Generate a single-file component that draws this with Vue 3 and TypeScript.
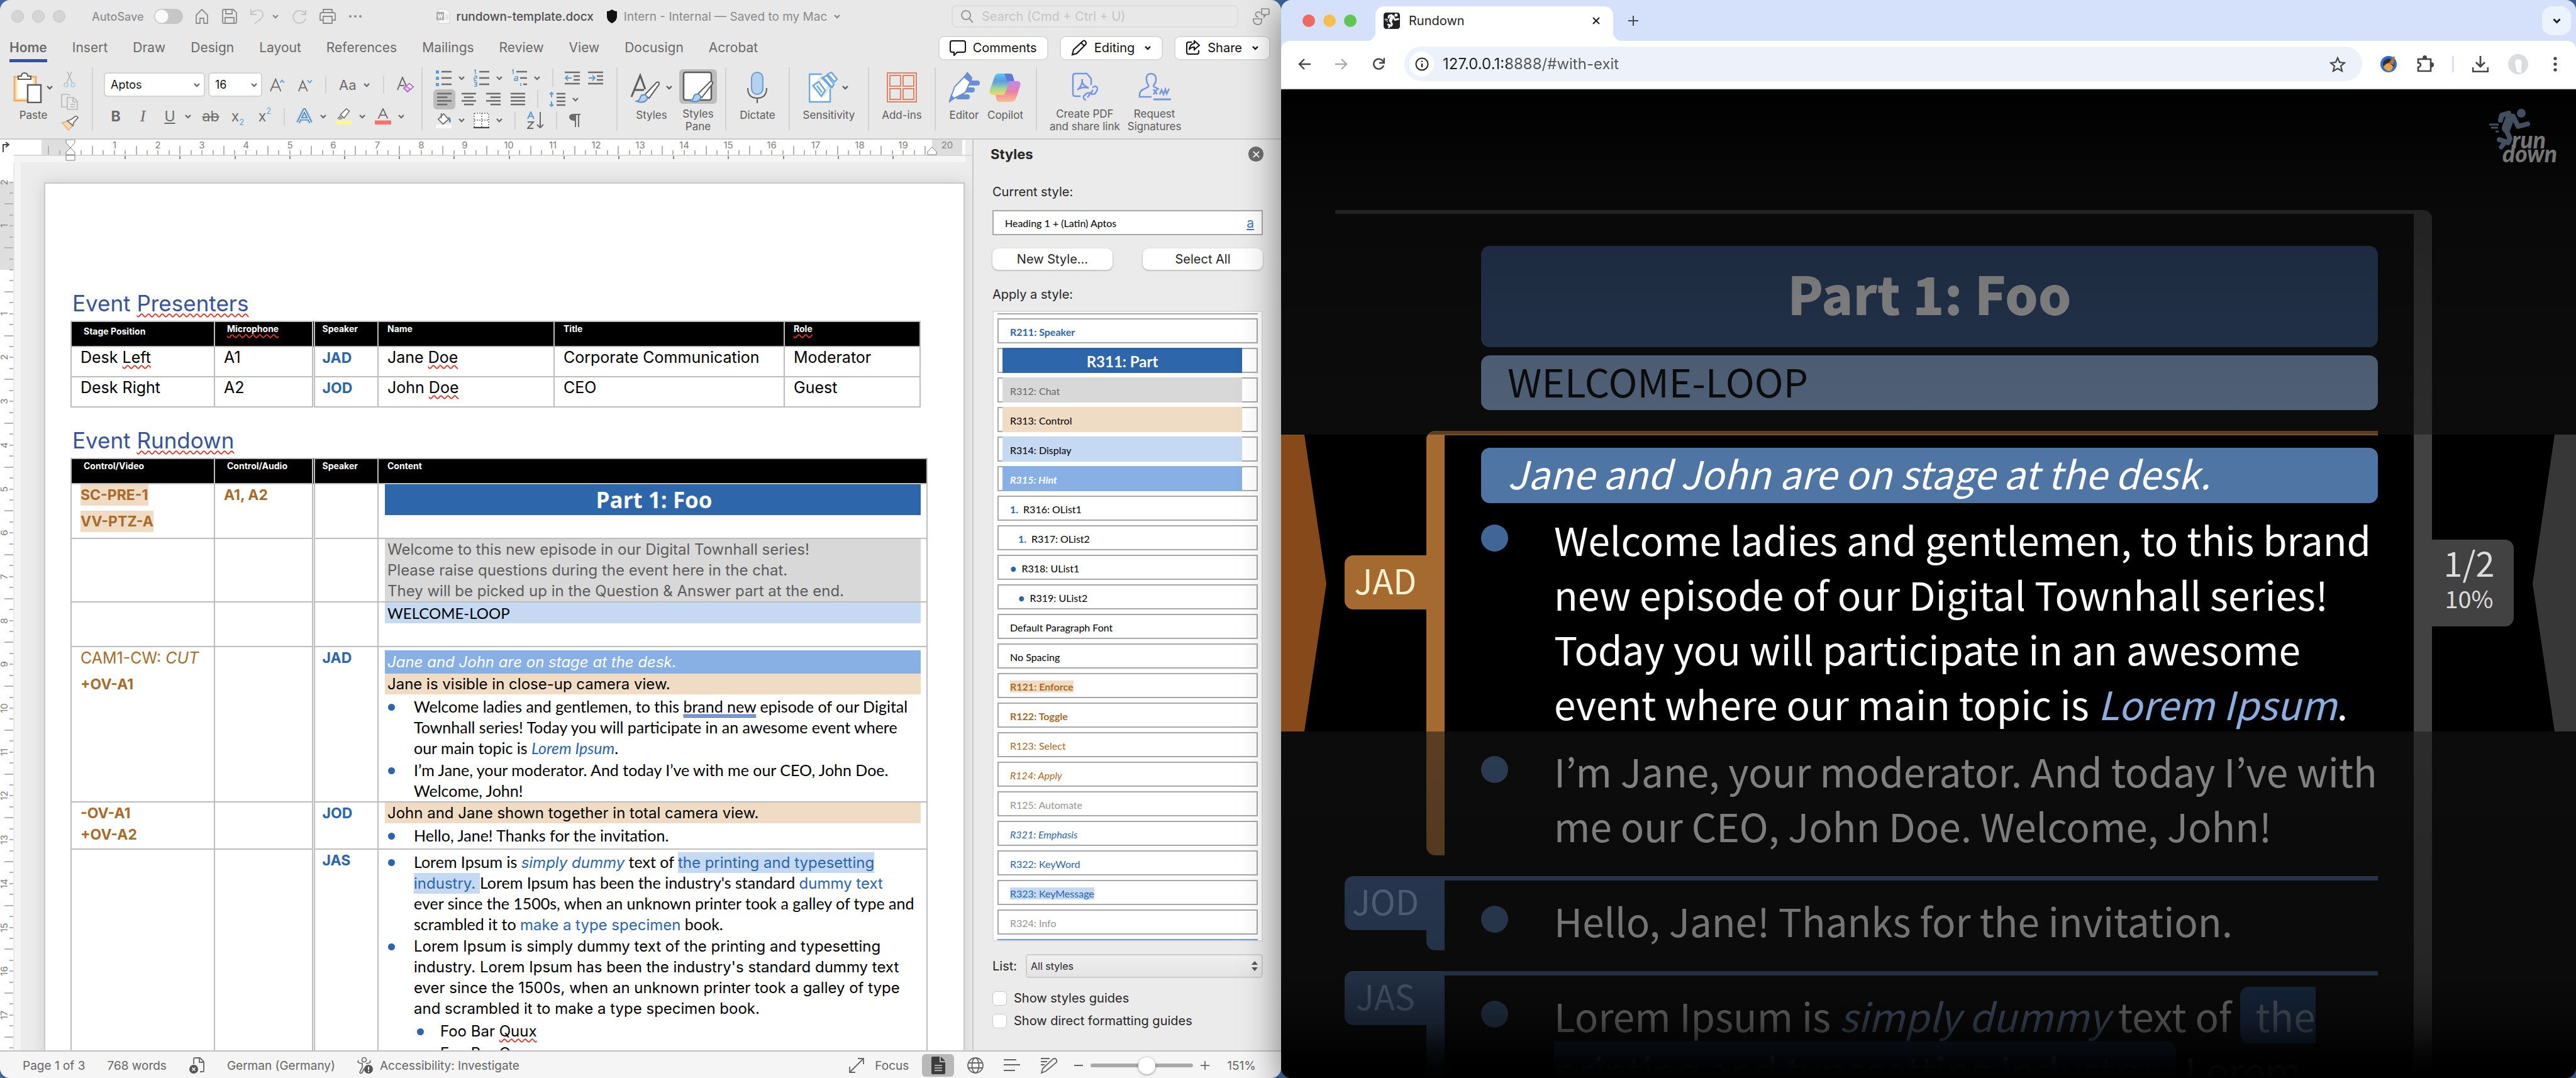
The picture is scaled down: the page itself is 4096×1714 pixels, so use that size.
<script setup lang="ts">
import { h, ref } from 'vue'

type IconDef = [number, number, string]

const runner =
  '<circle cx="51" cy="7" r="7" fill="currentColor" stroke="none"/><path stroke-width="14" d="M33 14 27 31"/><path stroke-width="8" d="M31 7 20 10 18 18M38 12l8 16 15-4M27 34l6 13-3 7-14-5"/><path stroke-width="7" d="m26 52-7 9"/><path stroke-width="3" stroke-linecap="butt" d="M0 25h15M3 30h11M10 36h5"/>'

const bars = (rows: number[][]) =>
  rows.map(([x1, x2], i) => `<path stroke-width="2.6" d="M${x1} ${3 + i * 6}H${x2}"/>`).join('')

const icons: Record<string, IconDef> = {
  home: [24, 24, '<path stroke-width="1.8" d="M3 10 12 1l9 9v13h-6v-8H9v8H3z"/>'],
  save: [24, 24, '<path stroke-width="1.8" d="M1 3q0-2 2-2h15l5 5v15q0 2-2 2H3q-2 0-2-2zM6 1v7h10V1M5 23v-9h14v9"/>'],
  undo: [24, 26, '<path stroke-width="1.8" d="M2 1v9h9M2 9C8 1 20 1 21 10c1 7-9 10-13 15"/>'],
  redo: [24, 24, '<path stroke-width="1.8" d="M22 2v7h-7M21 8A10 10 0 1 0 22 15"/>'],
  print: [26, 24, '<path stroke-width="1.8" d="M6 6V1h14v5M6 18H1V9q0-3 3-3h18q3 0 3 3v9h-5M6 12h14v11H6z"/>'],
  dots: [22, 6, '<g fill="currentColor" stroke="none"><circle cx="3" cy="3" r="2"/><circle cx="11" cy="3" r="2"/><circle cx="19" cy="3" r="2"/></g>'],
  chev: [12, 8, '<path stroke-width="2.4" d="m2 2 4 4 4-4"/>'],
  file: [22, 24, '<path fill="#f6f6f6" stroke="#cfcfcf" d="M3 .5h12l6 6v17H3z"/><path fill="#a9a9a9" stroke="none" d="M0 5h12v13H0z"/><path stroke="#fff" stroke-width="1.5" d="m2.500 8 1.500 7 2-6 2 6L9.500 8"/><path stroke="#c4c4c4" d="M14 10h5M14 13h5M14 16h5"/>'],
  shield: [18, 22, '<path fill="#111" stroke="none" d="M9 0c3 2 5 3 8 3v8c0 6-4 9-8 11-4-2-8-5-8-11V3c3 0 5-1 8-3z"/>'],
  search: [22, 22, '<circle cx="9" cy="9" r="7" stroke-width="2"/><path stroke-width="2" d="m14 14 6 7"/>'],
  person: [28, 28, '<path stroke-width="1.700" d="M15 2h10q2 0 2 2v5q0 2-2 2h-3l-3 4v-4h-4zM13 9a4 4 0 1 0-3 6M2 18h13v3q0 6-6 6t-7-6z"/>'],
  comment: [26, 26, '<path stroke-width="2" d="M4 2h18q3 0 3 3v12q0 3-3 3H12l-5 5v-5H4q-3 0-3-3V5q0-3 3-3z"/>'],
  pencil: [26, 26, '<path stroke-width="2" d="m2 24 2-8L18 3q3-3 5 0t0 5L9 22zM16 5l5 5"/>'],
  share: [24, 24, '<path stroke-width="2" d="M10 3H5Q2 3 2 6v13q0 3 3 3h13q3 0 3-3v-3M14 1l8 7-8 7v-4q-6 0-8 4Q7 6 14 5z"/>'],
  paste: [46, 50, '<path fill="#fae6b8" stroke="#ecae74" stroke-width="3" d="M2 8h34v38H2z"/><path fill="#fff" stroke="none" d="M7 12h24v30H7z"/><path fill="#fff" stroke-width="2" d="M8 12V7h5q0-5 5-5t5 5h5v5z"/><path fill="#fff" stroke-width="2.500" d="M23 21h21v28H23z"/>'],
  cut: [20, 26, '<path stroke="#b9b9b9" stroke-width="1.700" d="m6 1 8 18M13 1 5 19"/><g stroke="#a9cbe8" stroke-width="1.700"><circle cx="4" cy="22" r="3"/><circle cx="15" cy="22" r="3"/></g>'],
  copy: [28, 26, '<path stroke="#b9b9b9" stroke-width="1.700" d="M9 21H1V1h11l2 2M10 6h10l6 6v13H10zM19 6v7h7M15 17h7M15 21h7"/>'],
  brush: [28, 24, '<path fill="#f8dcae" stroke="#ecae74" stroke-width="1.700" d="m2 11 12-3 5 7-7 8z"/><path fill="#fff" stroke-width="1.700" d="m10 8 6-2 8-6 3 3-7 8-1 5z"/>'],
  growA: [26, 24, '<path stroke-width="2" d="m1 23 9-21 9 21M4 16h12"/><path stroke="#5a9fd8" stroke-width="2" d="m18 8 3-4 4 4"/>'],
  shrinkA: [26, 24, '<path stroke-width="2" d="m2 23 7-18 8 18M4 17h10"/><path stroke="#5a9fd8" stroke-width="2" d="m17 4 4 4 4-4"/>'],
  clearA: [28, 26, '<path stroke-width="2" d="M1 21 9 1l6 14M4 14h8"/><path fill="#e7c9ef" stroke="#b064c0" stroke-width="1.700" d="m11 18 9-7 6 5-9 8z"/><path fill="#fff" stroke="#b064c0" stroke-width="1.500" d="m15 15 5-4 6 5-4 4z"/>'],
  texta: [28, 26, '<path stroke="#b5d4ef" stroke-width="8" d="m4 23 10-20 10 20"/><path stroke="#4c86c6" stroke-width="5" d="m4 23 10-20 10 20M8 17h12"/><path stroke="#fff" stroke-width="1.500" d="m4 23 10-20 10 20M8 17h12"/>'],
  hilite: [28, 28, '<path fill="#999" stroke="none" d="m2 18 5-6 5 5-4 3z"/><path fill="#fff" stroke-width="1.700" d="m8 11 10-10 5 4-9 12z"/><path fill="#fdf98b" stroke="none" d="M1 21h26v7H1z"/>'],
  colorA: [28, 28, '<path stroke-width="2" d="m6 18 8-17 8 17M9 12h10"/><path fill="#f2746a" stroke="none" d="M0 21h28v7H0z"/>'],
  bullets: [25, 26, '<g fill="#5a9fd8" stroke="none"><path d="M0 1h5v5H0zM0 11h5v5H0zM0 21h5v5H0z"/></g><path stroke-width="2.500" d="M9 3h16M9 13h16M9 23h16"/>'],
  numbers: [25, 28, '<path stroke="#5a9fd8" stroke-width="1.500" d="m1 2 2-1v7M1 11h4v3H1v4h4M1 21h4v6H1M2 24h3"/><path stroke-width="2.500" d="M9 4h16M9 14h16M9 24h16"/>'],
  multi: [25, 28, '<path stroke="#5a9fd8" stroke-width="1.500" d="m1 2 2-1v7M5 12h5v6H5v-3h5M15 22v5"/><path stroke-width="2.500" d="M8 4h17M14 14h11M19 24h6"/>'],
  outdent: [24, 24, '<path stroke-width="2.500" d="M0 3h24M14 9h10M14 15h10M0 21h24"/><path stroke="#5a9fd8" stroke-width="2" d="M11 12H1m4-4-4 4 4 4"/>'],
  indent: [24, 24, '<path stroke-width="2.500" d="M0 3h24M14 9h10M14 15h10M0 21h24"/><path stroke="#5a9fd8" stroke-width="2" d="M1 12h10M7 8l4 4-4 4"/>'],
  left: [24, 24, bars([[0, 24], [0, 17], [0, 24], [0, 17]])],
  center: [24, 24, bars([[0, 24], [4, 20], [0, 24], [4, 20]])],
  right: [24, 24, bars([[0, 24], [7, 24], [0, 24], [7, 24]])],
  justify: [24, 24, bars([[0, 24], [0, 24], [0, 24], [0, 24]])],
  spacing: [26, 24, '<path stroke="#5a9fd8" stroke-width="2" d="M4 1v8M1 4l3-3 3 3M4 23v-8m-3 5 3 3 3-3"/><path stroke-width="2.500" d="M12 3h14M12 9h14M12 15h14M12 21h14"/>'],
  bucket: [26, 26, '<path fill="#fff" stroke-width="1.800" d="m4 11 9-9 8 9-9 8z"/><path stroke-width="1.800" d="M9 1v8"/><path stroke="#5a86c0" stroke-width="3" d="M21 8q3 3 2 8"/><path fill="#fafafa" stroke="none" d="M0 20h26v6H0z"/>'],
  borders: [25, 25, '<path fill="#fff" stroke="none" d="M0 0h25v25H0z"/><path stroke-width="1.500" stroke-dasharray="2 2" d="M1 1h23v22M1 1v22M13 1v22M1 12h23"/><path stroke="#444" stroke-width="2.500" d="M0 24h25"/>'],
  sort: [28, 28, '<path stroke="#5a9fd8" stroke-width="2" d="m1 12 5-11 5 11M3 8h6"/><path stroke-width="2" d="M1 17h9L1 27h9M21 1v25m-5-5 5 5 5-5"/>'],
  pilcrow: [20, 22, '<path fill="currentColor" stroke="none" d="M9 1h10v2h-2v19h-2V3h-3v19h-2V12H8Q1 11 1 6t8-5z"/>'],
  styles: [50, 50, '<path stroke-width="3" d="m2 40 14-34 8 22M7 29h15"/><path fill="#fff" stroke-width="2" d="M23 37 42 17q5-2 4 3L30 42z"/><path fill="#b2d2f0" stroke="#5b8fc6" stroke-width="2" d="M10 47q5-1 6-6t8-4q5 3 2 8-5 6-16 2z"/>'],
  pane: [52, 50, '<rect x="3" y="2" width="44" height="44" rx="3" fill="#fff" stroke-width="2.500"/><path fill="#fff" stroke-width="2" d="M25 37 45 17q5-2 4 3L32 42z"/><path fill="#b2d2f0" stroke="#5b8fc6" stroke-width="2" d="M13 47q5-1 6-6t8-4q5 3 2 8-5 6-16 2z"/>'],
  mic: [34, 50, '<rect x="8" y="1" width="18" height="35" rx="9" fill="#b2d2f0" stroke="#6b9bd0" stroke-width="2"/><path stroke-width="2" d="M2 26q0 16 15 16t15-16M17 42v8"/>'],
  sens: [46, 50, '<path fill="#fff" stroke="#6ba9dc" stroke-width="2.500" d="M1 4h33v44H1z"/><path fill="#fff" stroke="#e8e8e8" stroke-width="6" d="m8 24 18-22 16 8-18 26z"/><path fill="#fff" stroke="#6ba9dc" stroke-width="2.500" d="m7 22 9-6 10 14-6 9zM13 22l8 11M21 10l8-4 11 14-3 5zM30 4l6-3 9 11-4 4z"/><path stroke="#6ba9dc" stroke-width="4" d="m22 9 14 16"/>'],
  addins: [48, 48, '<path stroke="#df8466" stroke-width="2" d="M1 1h46v46H1zM5 5h17v17H5zM26 5h17v17H26zM5 26h17v17H5zM26 26h17v17H26z"/>'],
  editor: [50, 50, '<g fill="#6c8fd2" stroke="none"><rect x="24" y="14" width="26" height="8" rx="4"/><rect x="18" y="25" width="24" height="8" rx="4"/><rect x="12" y="36" width="22" height="8" rx="4"/></g><path fill="#fff" stroke="#6c8fd2" stroke-width="2" d="M2 46 10 24 30 3l7 8-10 22L6 44z"/><path fill="#6c8fd2" stroke="none" d="m1 50 3-14 6 6zM30 0l8 9-4 8-10-8z"/>'],
  copilot: [50, 48, '<defs><linearGradient id="cpa" x1="0" y1="0" x2="0" y2="1"><stop offset="0" stop-color="#5ec7f0"/><stop offset=".35" stop-color="#5b9be0"/><stop offset=".7" stop-color="#9ed79a"/><stop offset="1" stop-color="#f6d860"/></linearGradient><linearGradient id="cpb" x1="0" y1="0" x2="0" y2="1"><stop offset="0" stop-color="#b98bf0"/><stop offset=".5" stop-color="#ec7fa8"/><stop offset="1" stop-color="#f9c08a"/></linearGradient></defs><path fill="url(#cpa)" stroke="none" d="M14 2h18q5 0 4 6l-8 22q-2 6-8 6H6q-7 0-5-8L8 8q2-6 6-6z"/><path fill="#5f7ad8" stroke="none" d="M24 2h9q4 0 5 5l2 7H28z"/><path fill="url(#cpb)" stroke="none" d="M32 14h12q7 0 5 8l-6 18q-2 7-8 7H16q-4 0-5-5l-1-6h10q5 0 6-5z"/>'],
  pdf: [42, 46, '<path stroke="#7396e0" stroke-width="2.500" d="M14 38H6q-4 0-4-4V6q0-4 4-4h18l7 8v10M9 28q8-6 8-17-3 8 10 14-10-3-18 3zM23 44q-5-1-4-6l4-4q4-3 7 0M33 24l4-2q5 1 4 6l-4 6q-4 2-7-1M25 40l9-12"/>'],
  sign: [52, 44, '<path stroke="#7396e0" stroke-width="2.500" d="M21 38H2q-1-9 6-12l8-4q1-2-2-6-4-14 6-15 11 1 7 15-4 4-2 6l8 4M24 26l6 8M30 26l-6 8M34 34l3-7 3 7 3-8 2 7 4-8"/><path stroke="#7396e0" stroke-width="3" d="M24 42h28"/>'],
  close: [14, 14, '<path stroke-width="2" d="m2 2 10 10M12 2 2 12"/>'],
  plus: [16, 16, '<path stroke-width="2" d="M8 0v16M0 8h16"/>'],
  minus: [14, 14, '<path stroke-width="2" d="M0 7h14"/>'],
  proof: [26, 28, '<path stroke-width="1.800" d="M8 12V4q0-2 2-2h8l6 6v14q0 2-2 2h-4M17 2v7h7"/><circle cx="8" cy="20" r="7" fill="#555" stroke="none"/><path stroke="#fff" stroke-width="1.600" d="m5.500 17.500 5 5m0-5-5 5"/>'],
  access: [26, 28, '<circle cx="11" cy="5" r="3.500" stroke-width="1.700"/><path stroke-width="1.700" d="M2 6q-2 3 1 4l5 1v6l-4 8q2 3 4 0l3-6M20 6q2 3-1 4l-5 1"/><circle cx="18" cy="20" r="7" fill="#555" stroke="none"/><path stroke="#fff" stroke-width="2" d="M18 16v5M18 22.500v2"/>'],
  focus: [24, 24, '<path stroke-width="1.800" d="M14 1h9v9M23 1 1 23M1 14v9h9"/>'],
  page: [22, 28, '<path fill="#3d3d3d" stroke="none" d="M2 0h11v9h9v17q0 2-2 2H2q-2 0-2-2V2q0-2 2-2zM15 0l7 7h-7z"/><path stroke="#d0d0d0" stroke-width="1.700" d="M5 14h12M5 18h12M5 22h12"/>'],
  globe: [26, 26, '<circle cx="13" cy="13" r="12" stroke-width="1.800"/><ellipse cx="13" cy="13" rx="5.500" ry="12" stroke-width="1.800"/><path stroke-width="1.800" d="M2 9h22M2 17h22"/>'],
  outline: [26, 22, '<path stroke-width="1.800" d="M0 2h20M0 10h26M0 19h18"/>'],
  draft: [28, 26, '<path stroke-width="1.800" d="M1 2h14M1 7h10M1 12h6M2 25l2-7L20 3q3-2 5 0t1 5L9 22z"/>'],
  back: [20, 20, '<path stroke-width="2.400" d="M20 10H2m8-8-8 8 8 8"/>'],
  fwd: [20, 20, '<path stroke-width="2.400" d="M0 10h18M10 2l8 8-8 8"/>'],
  reload: [20, 20, '<path stroke-width="2.500" d="M18 12a8 8 0 1 1-2-8l2 3M19 0v8h-8"/>'],
  info: [22, 22, '<circle cx="11" cy="11" r="9.500" stroke-width="2"/><path stroke-width="2.400" d="M11 10v6M11 5.500v2"/>'],
  star: [26, 26, '<path stroke-width="2.200" d="m13 3 3 7 8 1-6 5 2 8-7-4-7 4 2-8-6-5 8-1z"/>'],
  broom: [26, 26, '<circle cx="13" cy="13" r="13" fill="#2f6cd0" stroke="none"/><circle cx="13" cy="13" r="9" fill="#2e2e33" stroke="none"/><path fill="#e5a04a" stroke="none" d="M5 17q4-6 9-6l6 5q0 6-5 8-6 1-10-7z"/><path fill="#b4713c" stroke="none" d="M20 1h3l-2 13-8-2z"/>'],
  puzzle: [28, 28, '<path stroke-width="2.600" d="M3 6h20v19H3v-6q4-1 4-4t-4-3z"/><path fill="currentColor" stroke="none" d="M10 5q0-5 3.500-5T17 5zM24 11q4 0 4 4t-4 4z"/>'],
  download: [26, 26, '<path stroke-width="2.800" d="M13 0v16M6 10l7 7 7-7M1 18v7h24v-7"/>'],
  avatar: [32, 32, '<circle cx="16" cy="16" r="16" fill="#dcdddf" stroke="none"/><path fill="#fbfcfd" stroke="#c9d0d6" d="M12 28q1-5-1-8-3-12 5-13 9 1 6 13-1 4 1 10-6 2-11-2z"/>'],
  more: [6, 24, '<g fill="currentColor" stroke="none"><circle cx="3" cy="3" r="2.600"/><circle cx="3" cy="12" r="2.600"/><circle cx="3" cy="21" r="2.600"/></g>'],
  fav: [72, 72, `<rect width="72" height="72" rx="12" fill="#202124" stroke="none"/><g transform="translate(4 4)" stroke="#fff" color="#fff" stroke-linecap="round" stroke-linejoin="round">${runner}</g>`],
  runner: [66, 66, runner],
}

const Icon = (p: { n: string; w?: number }) => {
  const [vw, vh, body] = icons[p.n]
  const w = p.w ?? vw
  return h('svg', {
    width: w,
    height: Math.round((w * vh) / vw),
    viewBox: `0 0 ${vw} ${vh}`,
    fill: 'none',
    stroke: 'currentColor',
    'aria-hidden': 'true',
    innerHTML: body,
  })
}
Icon.props = ['n', 'w']

const tabs = ['Home', 'Insert', 'Draw', 'Design', 'Layout', 'References', 'Mailings', 'Review', 'View', 'Docusign', 'Acrobat']

const cm = 69.7
const hTicks = Array.from({ length: 81 }, (_, i) => i - 2).map((q) => ({ x: Math.round(90 + (q * cm) / 4), tall: Math.abs(q) % 4 === 2 }))
const hNums = Array.from({ length: 20 }, (_, i) => i + 1).map((n) => ({ n, x: Math.round(90 + n * cm) }))
const tabStops = Array.from({ length: 15 }, (_, i) => Math.round(90 + (i + 1) * 87.2))
const vTicks = Array.from({ length: 80 }, (_, i) => i - 8).map((q) => ({ y: Math.round(171 + (q * cm) / 4), tall: Math.abs(q) % 4 === 2 }))
const vNums = Array.from({ length: 20 }, (_, i) => i - 2).filter((n) => n).map((n) => ({ n: Math.abs(n), y: Math.round(171 + n * cm) }))

interface StyleItem { t: string; c?: string; mark?: string }
const styleItems: StyleItem[] = [
  { t: 'R211: Speaker', c: 'b blue' },
  { t: 'R311: Part', c: 'fill part' },
  { t: 'R312: Chat', c: 'fill chat' },
  { t: 'R313: Control', c: 'fill control' },
  { t: 'R314: Display', c: 'fill display' },
  { t: 'R315: Hint', c: 'fill hint' },
  { t: 'R316: OList1', mark: '1.' },
  { t: 'R317: OList2', mark: '1.', c: 'deep' },
  { t: 'R318: UList1', mark: '•' },
  { t: 'R319: UList2', mark: '•', c: 'deep' },
  { t: 'Default Paragraph Font' },
  { t: 'No Spacing' },
  { t: 'R121: Enforce', c: 'b brown mark-o' },
  { t: 'R122: Toggle', c: 'b brown' },
  { t: 'R123: Select', c: 'brown' },
  { t: 'R124: Apply', c: 'brown i' },
  { t: 'R125: Automate', c: 'grey' },
  { t: 'R321: Emphasis', c: 'blue i' },
  { t: 'R322: KeyWord', c: 'blue' },
  { t: 'R323: KeyMessage', c: 'blue mark-b' },
  { t: 'R324: Info', c: 'grey' },
]

const autosave = ref(false)
const zoom = ref(56)
const query = ref('')
const current = ref('Heading 1 + (Latin) Aptos')
const url = ref('127.0.0.1:8888/#with-exit')
const guides = ref(false)
const direct = ref(false)
</script>

<template>
  <div class="desktop">
    <section class="word">
      <header class="titlebar">
        <div class="lights"><i></i><i></i><i></i></div>
        <label class="autosave">AutoSave <input v-model="autosave" type="checkbox" role="switch" /></label>
        <div class="quick">
          <button aria-label="Home"><Icon n="home" /></button>
          <button aria-label="Save"><Icon n="save" /></button>
          <button aria-label="Undo" class="pale"><Icon n="undo" /></button>
          <button aria-label="Undo history" class="tight"><Icon n="chev" /></button>
          <button aria-label="Redo" class="pale"><Icon n="redo" /></button>
          <button aria-label="Print"><Icon n="print" /></button>
          <button aria-label="More"><Icon n="dots" /></button>
        </div>
        <div class="docname">
          <Icon n="file" /><strong>rundown-template.docx</strong><Icon n="shield" class="sh" />
          <span>Intern - Internal — Saved to my Mac</span><Icon n="chev" />
        </div>
        <label class="search"><Icon n="search" /><input v-model="query" placeholder="Search (Cmd + Ctrl + U)" aria-label="Search" /></label>
        <button class="person" aria-label="Presence"><Icon n="person" /></button>
      </header>

      <nav class="tabs">
        <button v-for="(t, i) in tabs" :key="t" :class="{ on: i === 0 }">{{ t }}</button>
        <div class="actions">
          <button><Icon n="comment" />Comments</button>
          <button><Icon n="pencil" />Editing<Icon n="chev" class="cv" /></button>
          <button><Icon n="share" />Share<Icon n="chev" class="cv" /></button>
        </div>
      </nav>

      <div class="ribbon">
        <div class="group clip">
          <button class="big"><span class="pic"><Icon n="paste" /><Icon n="chev" /></span>Paste</button>
          <div class="mini">
            <button aria-label="Cut"><Icon n="cut" /></button>
            <button aria-label="Copy"><Icon n="copy" /></button>
            <button aria-label="Format painter"><Icon n="brush" /></button>
          </div>
        </div>
        <div class="group font">
          <div class="row r1">
            <div class="selects">
              <span class="sel wide"><select aria-label="Font"><option>Aptos</option></select><Icon n="chev" /></span>
              <span class="sel"><select aria-label="Size"><option>16</option></select><Icon n="chev" /></span>
            </div>
            <button aria-label="Grow"><Icon n="growA" w="24" /></button>
            <button aria-label="Shrink"><Icon n="shrinkA" w="24" /></button>
            <hr />
            <button class="split aa">Aa<Icon n="chev" /></button>
            <hr />
            <button aria-label="Clear"><Icon n="clearA" /></button>
          </div>
          <div class="row r2">
            <button class="ch"><b>B</b></button>
            <button class="ch serif"><i>I</i></button>
            <button class="split"><u class="ch">U</u><Icon n="chev" /></button>
            <button class="ch"><s>ab</s></button>
            <button class="ch sub">x<small>2</small></button>
            <button class="ch sup">x<small>2</small></button>
            <hr />
            <div class="row r3">
              <button class="split"><Icon n="texta" /><Icon n="chev" /></button>
              <button class="split"><Icon n="hilite" w="26" /><Icon n="chev" /></button>
              <button class="split"><Icon n="colorA" w="26" /><Icon n="chev" /></button>
            </div>
          </div>
        </div>
        <div class="group para">
          <div class="row">
            <button class="split"><Icon n="bullets" /><Icon n="chev" /></button>
            <button class="split"><Icon n="numbers" /><Icon n="chev" /></button>
            <button class="split"><Icon n="multi" /><Icon n="chev" /></button>
            <hr />
            <button aria-label="Outdent"><Icon n="outdent" /></button>
            <button aria-label="Indent"><Icon n="indent" /></button>
          </div>
          <div class="row al">
            <button v-for="a in ['left', 'center', 'right', 'justify']" :key="a" :aria-label="a" :class="['abtn', { on: a === 'left' }]"><Icon :n="a" w="23" /></button>
            <hr />
            <button class="split"><Icon n="spacing" /><Icon n="chev" /></button>
          </div>
          <div class="row">
            <button class="split"><Icon n="bucket" w="25" /><Icon n="chev" /></button>
            <button class="split"><Icon n="borders" /><Icon n="chev" /></button>
            <hr />
            <button aria-label="Sort"><Icon n="sort" /></button>
            <hr />
            <button aria-label="Marks"><Icon n="pilcrow" /></button>
          </div>
        </div>
        <div class="group g-styles">
          <button class="big"><span class="pic"><Icon n="styles" /><Icon n="chev" /></span>Styles</button>
          <button class="big on"><span class="pic"><Icon n="pane" /></span>Styles<br />Pane</button>
        </div>
        <div class="group g1"><button class="big"><span class="pic"><Icon n="mic" /></span>Dictate</button></div>
        <div class="group g2"><button class="big"><span class="pic"><Icon n="sens" /><Icon n="chev" /></span>Sensitivity</button></div>
        <div class="group g3"><button class="big"><span class="pic"><Icon n="addins" /></span>Add-ins</button></div>
        <div class="group g4">
          <button class="big"><span class="pic"><Icon n="editor" /></span>Editor</button>
          <button class="big"><span class="pic"><Icon n="copilot" /></span>Copilot</button>
        </div>
        <div class="group g5">
          <button class="big"><span class="pic"><Icon n="pdf" /></span>Create PDF<br />and share link</button>
          <button class="big"><span class="pic"><Icon n="sign" /></span>Request<br />Signatures</button>
        </div>
      </div>

      <div class="work">
        <div class="editor">
          <div class="corner"><svg width="22" height="24" fill="none" stroke="#444" stroke-width="2"><path d="M5 20V8h8M9 4l5 4-5 4" /></svg></div>
          <svg class="hruler" width="100%" height="36">
            <rect width="100%" height="24" fill="#fff" />
            <rect y="24" width="100%" height="12" fill="#f5f5f5" />
            <rect x="44" width="46" height="24" fill="#dedede" />
            <rect x="1460" width="48" height="24" fill="#dedede" />
            <path d="M0 25H1600" stroke="#d8d8d8" stroke-width="2" />
            <path v-for="t in hTicks" :key="t.x" :d="`M${t.x} ${t.tall ? 10 : 17}V24`" stroke="#b4b4b4" stroke-width="2" />
            <path v-for="x in tabStops" :key="x" :d="`M${x} 26v5`" stroke="#8a8a8a" stroke-width="2" />
            <text v-for="t in hNums" :key="t.n" :x="t.x" y="14" text-anchor="middle">{{ t.n }}</text>
            <path d="M83 0h14v5l-7 8 7 7v4H83v-4l7-7-7-8zM83 25h14v8H83zM1453 24v-5l7-7 7 7v5z" fill="#fff" stroke="#7d7d7d" />
          </svg>
          <svg class="vruler" width="33" height="100%">
            <rect width="22" height="100%" fill="#fff" />
            <rect x="22" width="11" height="100%" fill="#f5f5f5" />
            <rect y="31" width="22" height="140" fill="#dedede" />
            <path d="M22 0V1500" stroke="#d8d8d8" />
            <path v-for="t in vTicks" :key="t.y" :d="`M${t.tall ? 7 : 15} ${t.y}H21`" stroke="#b4b4b4" stroke-width="2" />
            <text v-for="t in vNums" :key="t.y" :transform="`translate(12 ${t.y}) rotate(-90)`" text-anchor="middle">{{ t.n }}</text>
          </svg>
          <div class="canvas">
            <article class="page">
              <h1>Event <em class="sq">Presenters</em></h1>
              <table class="t1">
                <colgroup><col class="c1" /><col class="c2" /><col class="c3" /><col class="c4" /><col class="c5" /><col /></colgroup>
                <thead>
                  <tr><th class="low">Stage Position</th><th class="dbl"><span class="sq">Microphone</span></th><th>Speaker</th><th>Name</th><th>Title</th><th><span class="sq">Role</span></th></tr>
                </thead>
                <tbody>
                  <tr><td>Desk <span class="sq">Left</span></td><td class="dbl">A1</td><td class="spk">JAD</td><td>Jane <span class="sq">Doe</span></td><td>Corporate Communication</td><td>Moderator</td></tr>
                  <tr><td>Desk Right</td><td class="dbl">A2</td><td class="spk">JOD</td><td>John <span class="sq">Doe</span></td><td>CEO</td><td>Guest</td></tr>
                </tbody>
              </table>

              <h1>Event <em class="sq">Rundown</em></h1>
              <table class="t2">
                <colgroup><col class="c1" /><col class="c2" /><col class="c3" /><col /></colgroup>
                <thead>
                  <tr><th>Control/Video</th><th class="dbl">Control/Audio</th><th>Speaker</th><th>Content</th></tr>
                </thead>
                <tbody>
                  <tr class="h87">
                    <td class="ctl wide"><p><mark class="o">SC-PRE-1</mark></p><p><mark class="o">VV-PTZ-A</mark></p></td>
                    <td class="dbl ctl"><p>A1, A2</p></td><td></td>
                    <td class="body"><div class="bar part">Part 1: Foo</div></td>
                  </tr>
                  <tr class="h100">
                    <td></td><td class="dbl"></td><td></td>
                    <td class="body"><div class="bar chat">Welcome to this new episode in our Digital Townhall series!<br />Please raise questions during the event here in the chat.<br />They will be picked up in the Question &amp; Answer part at the end.</div></td>
                  </tr>
                  <tr class="h71">
                    <td></td><td class="dbl"></td><td></td>
                    <td class="body"><div class="bar display">WELCOME-LOOP</div></td>
                  </tr>
                  <tr class="h244">
                    <td class="ctl wide"><p class="rg">CAM1-CW: <i>CUT</i></p><p>+OV-A1</p></td>
                    <td class="dbl"></td><td class="spk">JAD</td>
                    <td class="body">
                      <div class="bar hint">Jane and John are on stage at the desk.</div>
                      <div class="bar control">Jane is visible in close-up camera view.</div>
                      <ul>
                        <li>Welcome ladies and gentlemen, to this <span class="gram">brand new</span> episode of our Digital<br />Townhall series! Today you will participate in an awesome event where<br />our main topic is <i class="blue">Lorem Ipsum</i>.</li>
                        <li>I’m Jane, your moderator. And today I’ve with me our CEO, John Doe.<br />Welcome, John!</li>
                      </ul>
                    </td>
                  </tr>
                  <tr class="h75">
                    <td class="ctl"><p>-OV-A1</p><p>+OV-A2</p></td>
                    <td class="dbl"></td><td class="spk">JOD</td>
                    <td class="body">
                      <div class="bar control">John and Jane shown together in total camera view.</div>
                      <ul><li>Hello, Jane! Thanks for the invitation.</li></ul>
                    </td>
                  </tr>
                  <tr>
                    <td></td><td class="dbl"></td><td class="spk">JAS</td>
                    <td class="body">
                      <ul>
                        <li>Lorem Ipsum is <i class="blue apt">simply dummy</i> text of <mark class="b apt">the printing and typesetting</mark><br /><mark class="b apt">industry. </mark>Lorem Ipsum has been the industry's standard <span class="blue apt">dummy text</span><br />ever since the 1500s, when an unknown printer took a galley of type and<br />scrambled it to <span class="blue apt">make a type specimen</span> book.</li>
                        <li class="apt">Lorem Ipsum is simply dummy text of the printing and typesetting<br />industry. Lorem Ipsum has been the industry's standard dummy text<br />ever since the 1500s, when an unknown printer took a galley of type<br />and scrambled it to make a type specimen book.
                          <ul><li>Foo Bar <span class="sq">Quux</span></li><li>Foo Bar Quux</li></ul>
                        </li>
                      </ul>
                    </td>
                  </tr>
                </tbody>
              </table>
            </article>
          </div>
        </div>

        <aside class="pane">
          <div class="phead"><h2>Styles</h2><button aria-label="Close"><Icon n="close" w="13" /></button></div>
          <label class="lbl" for="cur">Current style:</label>
          <div class="cur"><input id="cur" v-model="current" /><span>a</span></div>
          <div class="pbtns"><button>New Style...</button><button>Select All</button></div>
          <div class="lbl second">Apply a style:</div>
          <ul class="slist">
            <li v-for="s in styleItems" :key="s.t">
              <button :class="s.c"><b v-if="s.mark" :class="['mk', { dot: s.mark === '•' }]">{{ s.mark }}</b><span>{{ s.t }}</span></button>
            </li>
          </ul>
          <div class="plist"><label for="ls">List:</label><span class="psel"><select id="ls"><option>All styles</option></select><svg width="10" height="16" fill="#555"><path d="m0 6 5-6 5 6zM0 10l5 6 5-6z" /></svg></span></div>
          <label class="chk"><input v-model="guides" type="checkbox" />Show styles guides</label>
          <label class="chk"><input v-model="direct" type="checkbox" />Show direct formatting guides</label>
        </aside>
      </div>

      <footer class="status">
        <span>Page 1 of 3</span><span>768 words</span><Icon n="proof" /><span>German (Germany)</span>
        <span class="acc"><Icon n="access" />Accessibility: Investigate</span>
        <div class="sright">
          <button class="fc"><Icon n="focus" />Focus</button>
          <button class="pg" aria-label="Print layout"><Icon n="page" /></button>
          <button aria-label="Web layout"><Icon n="globe" /></button>
          <button aria-label="Outline"><Icon n="outline" /></button>
          <button aria-label="Draft"><Icon n="draft" /></button>
          <div class="zm">
            <button aria-label="Zoom out"><Icon n="minus" /></button>
            <input v-model="zoom" type="range" min="0" max="100" aria-label="Zoom" />
            <button aria-label="Zoom in"><Icon n="plus" w="14" /></button>
          </div>
          <span class="pc">151%</span>
        </div>
      </footer>
    </section>

    <section class="chrome">
      <header class="strip">
        <div class="lights col"><i></i><i></i><i></i></div>
        <div class="tab"><Icon n="fav" w="26" /><span>Rundown</span><button aria-label="Close tab"><Icon n="close" /></button></div>
        <button class="new" aria-label="New tab"><Icon n="plus" /></button>
        <button class="menu" aria-label="Search tabs"><Icon n="chev" w="15" /></button>
      </header>
      <div class="toolbar">
        <button aria-label="Back"><Icon n="back" /></button>
        <button aria-label="Forward" class="dim"><Icon n="fwd" /></button>
        <button aria-label="Reload"><Icon n="reload" /></button>
        <div class="omni">
          <span class="inf"><Icon n="info" /></span>
          <input v-model="url" aria-label="Address" />
          <button aria-label="Bookmark"><Icon n="star" /></button>
        </div>
        <div class="ext">
          <button aria-label="Cleaner"><Icon n="broom" /></button>
          <button aria-label="Extensions"><Icon n="puzzle" /></button>
          <hr />
          <button aria-label="Downloads"><Icon n="download" /></button>
          <button aria-label="Profile"><Icon n="avatar" /></button>
          <button aria-label="Menu" class="mr"><Icon n="more" /></button>
        </div>
      </div>

      <main class="stage">
        <div class="frame">
          <div class="box ptitle">Part 1: Foo</div>
          <div class="box pdisp">WELCOME-LOOP</div>
          <section class="sec act">
            <b class="who">JAD</b>
            <div class="sbody">
              <div class="box phint">Jane and John are on stage at the desk.</div>
              <p>Welcome ladies and gentlemen, to this brand<br />new episode of our Digital Townhall series!<br />Today you will participate in an awesome<br />event where our main topic is <i>Lorem Ipsum</i>.</p>
              <p>I’m Jane, your moderator. And today I’ve with<br />me our CEO, John Doe. Welcome, John!</p>
            </div>
          </section>
          <section class="sec">
            <b class="who">JOD</b>
            <div class="sbody"><p>Hello, Jane! Thanks for the invitation.</p></div>
          </section>
          <section class="sec">
            <b class="who">JAS</b>
            <div class="sbody">
              <p>Lorem Ipsum is <i>simply dummy</i> text of <mark class="ka">the</mark><br /><mark class="kb">printing and typesetting industry.</mark> Lorem<br />Ipsum has been</p>
            </div>
          </section>
        </div>
        <div class="veil top"></div>
        <div class="veil bottom"></div>
        <div class="focusband">
          <svg width="72" height="472"><path d="M0 0h37l35 237-35 235H0z" fill="#864a1a" /></svg>
          <div class="prog"><span>1/2</span><small>10%</small></div>
          <svg width="69" height="472"><path d="M69 0H35L0 237l35 235h34z" fill="#373737" /></svg>
        </div>
        <div class="logo"><Icon n="runner" class="run" /><span class="w1">run</span><span class="w2">down</span></div>
      </main>
    </section>
  </div>
</template>

<style>
html,
body {
  margin: 0;
  background: #4a75a8;
}
</style>

<style scoped>
* {
  box-sizing: border-box;
}
button,
input,
select {
  font: inherit;
  color: inherit;
  border: 0;
  padding: 0;
  margin: 0;
  background: none;
}
button {
  display: inline-flex;
  align-items: center;
  justify-content: center;
}
select {
  appearance: none;
}
svg {
  display: block;
  flex: none;
}
h1,
h2,
p,
ul {
  margin: 0;
  padding: 0;
}
hr {
  margin: 0;
  border: 0;
  width: 2px;
  height: 29px;
  background: #d2d2d2;
}
.desktop {
  display: grid;
  grid-template-columns: 2037fr 2059fr;
  height: 100vh;
  overflow: hidden;
  font-family: Inter, 'Liberation Sans', sans-serif;
  background: #3d67a2;
}
.word {
  display: flex;
  flex-direction: column;
  min-width: 0;
  min-height: 0;
  background: #e8e8e8;
  border-radius: 16px;
  overflow: hidden;
  font-size: 20px;
  color: #666;
}
.titlebar {
  display: flex;
  align-items: center;
  height: 52px;
  padding: 0 18px;
}
.lights {
  display: flex;
  gap: 13px;
}
.lights i {
  width: 20px;
  height: 20px;
  border-radius: 50%;
  background: #d5d5d5;
  border: 1px solid #c2c2c2;
}
.autosave {
  display: flex;
  align-items: center;
  gap: 16px;
  margin-left: 42px;
  font-size: 18px;
  font-weight: 500;
  color: #8f8f8f;
}
.autosave input {
  appearance: none;
  width: 46px;
  height: 24px;
  border-radius: 12px;
  background: radial-gradient(circle at 12px 12px, #fafafa 10px, transparent 11px) #c6c6c6;
}
.quick {
  display: flex;
  align-items: center;
  gap: 20px;
  margin-left: 18px;
  color: #8c8c8c;
}
.tight {
  margin-left: -9px;
}
.pale {
  color: #c4c4c4;
}
.docname {
  display: flex;
  align-items: center;
  gap: 10px;
  margin-left: 118px;
  font-size: 19px;
  color: #8a8a8a;
  white-space: nowrap;
}
.docname strong {
  font-weight: 500;
  color: #505050;
}
.docname .sh {
  margin-left: 10px;
}
.search {
  display: flex;
  align-items: center;
  gap: 12px;
  margin-left: auto;
  width: 456px;
  height: 36px;
  padding-left: 12px;
  border: 2px solid #dcdcdc;
  border-radius: 8px;
  color: #999;
}
.search input {
  flex: 1;
  min-width: 0;
}
.search input::placeholder {
  color: #c4c4c4;
  opacity: 1;
}
.person {
  margin-left: 22px;
  color: #8c8c8c;
}
.tabs {
  display: flex;
  align-items: center;
  gap: 40px;
  height: 48px;
  padding: 0 17px 0 15px;
  color: #6a6a6a;
}
.tabs > button {
  height: 46px;
  padding-top: 4px;
  font-size: 21px;
  border-bottom: 5px solid transparent;
}
.tabs > button.on {
  font-weight: 600;
  border-color: #33549b;
}
.actions {
  display: flex;
  gap: 18px;
  margin-left: auto;
  color: #111;
}
.actions button {
  height: 39px;
  padding: 0 16px;
  gap: 11px;
  border: 2px solid #dadada;
  border-radius: 9px;
  background: #fff;
}
.cv {
  margin-left: 4px;
}
.ribbon {
  display: flex;
  height: 122px;
  padding-top: 7px;
  border-bottom: 2px solid #cbcbcb;
  font-size: 18px;
  line-height: 20px;
  color: #6c6c6c;
}
.group {
  display: flex;
  position: relative;
  height: 101px;
  border-right: 2px solid #d2d2d2;
}
.ribbon .group:last-child {
  border: 0;
}
.row {
  display: flex;
  align-items: center;
}
.split {
  gap: 10px;
}
.big {
  flex-direction: column;
  align-items: center;
  justify-content: flex-start;
  gap: 6px;
  padding-top: 4px;
  color: #5c5c5c;
  font-size: 17px;
  height: 104px;
}
.pic {
  display: flex;
  align-items: center;
  justify-content: center;
  gap: 6px;
  height: 56px;
}
.clip {
  width: 148px;
  padding-left: 21px;
  gap: 12px;
}
.mini {
  display: flex;
  flex-direction: column;
  align-items: center;
  justify-content: space-between;
  padding-top: 6px;
}
.font {
  width: 524px;
  flex-direction: column;
  padding-left: 17px;
}
.r1 {
  gap: 20px;
  height: 56px;
}
.r2 {
  gap: 17px;
  height: 46px;
  padding-left: 6px;
}
.r3 {
  gap: 14px;
}
.selects {
  display: flex;
  gap: 5px;
  margin-right: -8px;
}
.sel {
  display: flex;
  align-items: center;
  width: 86px;
  height: 39px;
  padding: 0 5px 0 9px;
  border: 2px solid #d4d4d4;
  border-radius: 6px;
  background: #fff;
}
.sel.wide {
  width: 161px;
}
.sel select {
  flex: 1;
  min-width: 0;
  color: #111;
}
.aa {
  font-size: 22px;
}
.ch {
  width: 26px;
  font-size: 23px;
  text-align: center;
}
.serif {
  font-family: 'Liberation Serif', serif;
  font-size: 26px;
}
.ch small {
  font-size: 13px;
  color: #5a9fd8;
}
.sub small {
  margin-top: 18px;
}
.sup small {
  margin-bottom: 18px;
}
.para {
  width: 310px;
  flex-direction: column;
  padding-left: 21px;
}
.para .row {
  height: 36px;
  gap: 13px;
}
.para .row hr {
  margin: 0 5px;
}
.para .al {
  gap: 4px;
  margin-left: -4px;
}
.para .al hr {
  margin: 0 13px 0 9px;
}
.abtn {
  width: 35px;
  height: 32px;
  border-radius: 6px;
}
.abtn.on {
  background: #bdbdbd;
}
.g-styles {
  width: 173px;
  padding-left: 20px;
  gap: 10px;
}
.big.on .pic {
  width: 60px;
  margin-top: -1px;
  border-radius: 6px;
  background: #bdbdbd;
}
.g1 {
  width: 101px;
  justify-content: center;
}
.g2 {
  width: 126px;
  justify-content: center;
}
.g3 {
  width: 106px;
  justify-content: center;
}
.g4 {
  width: 161px;
  justify-content: center;
  gap: 12px;
}
.g5 {
  padding-left: 20px;
  gap: 12px;
}
.work {
  flex: 1;
  min-height: 0;
  display: grid;
  grid-template-columns: 1fr 491px;
}
.editor {
  display: grid;
  grid-template-columns: 33px 1fr;
  grid-template-rows: 36px 1fr;
  min-width: 0;
  min-height: 0;
  overflow: hidden;
  background: #ececec;
}
.corner {
  background: #fff;
  width: 22px;
}
.hruler {
  margin-left: -11px;
  overflow: visible;
}
.hruler text,
.vruler text {
  font-size: 15px;
  fill: #808080;
}
.canvas {
  padding: 32px 12px 0 37px;
  min-height: 0;
  overflow: hidden;
}
.page {
  min-height: 100%;
  padding: 170px 57px 0 40px;
  background: #fff;
  border: 2px solid #c8c8c8;
  border-bottom: 0;
  box-shadow: 0 0 24px rgba(0, 0, 0, 0.12);
  color: #000;
  font-size: 25px;
  line-height: 32px;
  white-space: nowrap;
}
h1 {
  padding-left: 3px;
  font-size: 35px;
  line-height: 40px;
  font-weight: 400;
  color: #36539b;
}
h1 em {
  font-style: normal;
}
.sq {
  text-decoration: underline wavy #d93a2c 2px;
  text-underline-offset: 3px;
  text-decoration-skip-ink: none;
}
table {
  table-layout: fixed;
  width: 100%;
  margin-top: 8px;
  border-collapse: collapse;
}
.t1 {
  width: calc(100% - 11px);
  margin-bottom: 32px;
}
.c1 {
  width: 228px;
}
.c2 {
  width: 157px;
}
.c3 {
  width: 103px;
}
.c4 {
  width: 280px;
}
.c5 {
  width: 366px;
}
th,
td {
  padding: 0 0 0 14px;
  border: 2px solid #bdbdbd;
  text-align: left;
  vertical-align: top;
}
th {
  height: 40px;
  padding-left: 19px;
  font-size: 14px;
  line-height: 22px;
  font-weight: 700;
  color: #fff;
  background: #000;
}
th.dbl ~ th {
  padding-left: 14px;
}
th.low {
  line-height: 30px;
}
.dbl {
  border-right: 5px double #bdbdbd;
}
.dbl + td,
.dbl + th {
  padding-left: 12px !important;
}
.t1 td {
  height: 48px;
}
.spk {
  font-size: 23px;
  font-weight: 700;
  color: #2b65ac;
  line-height: 34px;
}
.ctl {
  font-size: 23px;
  font-weight: 700;
  color: #a86b29;
}
.ctl p {
  line-height: 34px;
}
.wide p {
  margin-bottom: 8px;
}
.rg {
  font-size: 25px;
  font-weight: 400;
}
mark {
  background: #c5d9f3;
  color: #2b65ac;
}
mark.o {
  display: inline-block;
  background: #f0dcc4;
  color: #a86b29;
}
mark.b {
  padding: 2px 0;
}
.h87 {
  height: 87px;
}
.h100 {
  height: 100px;
}
.h71 {
  height: 71px;
}
.h244 {
  height: 244px;
}
.h75 {
  height: 75px;
}
.body {
  padding: 0 9px 0 10px;
  font-size: 24px;
  line-height: 33px;
}
.bar {
  padding-left: 4px;
}
.bar.part {
  height: 49px;
  line-height: 50px;
  text-align: center;
  font-family: 'Open Sans', sans-serif;
  font-weight: 700;
  font-size: 35px;
  color: #fff;
  background: #2d66ab;
}
.bar.chat {
  color: #5c5c5c;
  background: #d8d8d8;
}
.bar.display {
  font-family: Lato, sans-serif;
  background: #c5d9f3;
}
.bar.hint {
  margin-top: 5px;
  line-height: 37px;
  font-style: italic;
  color: #fff;
  background: #88b0e4;
}
.bar.control {
  background: #f0dcc4;
}
.body ul {
  list-style: none;
  padding-top: 3px;
  font-family: Lato, sans-serif;
  font-size: 25px;
}
.body li {
  position: relative;
  padding-left: 46px;
  margin-bottom: 2px;
}
.body li:last-child {
  margin-bottom: 0;
}
.body li::before {
  content: '';
  position: absolute;
  left: 5px;
  top: 12px;
  width: 11px;
  height: 11px;
  border-radius: 50%;
  background: #2b65ac;
}
.body li li {
  padding-left: 42px;
}
.body li ul,
.body .apt {
  font-family: Inter, sans-serif;
  font-size: 24px;
}
.body li i,
.body li mark,
.body li span {
  line-height: 24px;
}
.blue {
  color: #2b65ac;
}
.gram {
  text-decoration: underline double #3a66c8 2px;
  text-underline-offset: 3px;
  text-decoration-skip-ink: none;
}
.pane {
  display: flex;
  flex-direction: column;
  padding: 8px 29px 23px 30px;
  border-left: 2px solid #c8c8c8;
  background: #ebebeb;
  color: #262626;
  min-height: 0;
}
.phead {
  display: flex;
  align-items: center;
  justify-content: space-between;
  margin-left: -3px;
  margin-right: -1px;
  height: 30px;
}
.phead h2 {
  font-size: 22px;
  font-weight: 700;
}
.phead button {
  width: 24px;
  height: 24px;
  border-radius: 50%;
  background: #6d6d6d;
  color: #fff;
}
.lbl {
  margin-top: 30px;
  line-height: 30px;
}
.lbl.second {
  margin-top: 24px;
}
.cur {
  display: flex;
  align-items: center;
  height: 40px;
  margin-top: 14px;
  padding: 0 12px 0 18px;
  border: 2px solid #a8a8a8;
  background: #fff;
  font-family: Lato, sans-serif;
  font-size: 16px;
  color: #000;
}
.cur input {
  flex: 1;
  min-width: 0;
}
.cur span {
  font-family: Inter, sans-serif;
  font-size: 21px;
  color: #3f78c8;
  text-decoration: underline;
}
.pbtns {
  display: flex;
  justify-content: space-between;
  margin-top: 21px;
}
.pbtns button {
  width: 191px;
  height: 34px;
  border-radius: 9px;
  background: #fff;
  box-shadow: 0 1px 3px rgba(0, 0, 0, 0.3);
}
.slist {
  flex: 1;
  min-height: 0;
  display: flex;
  flex-direction: column;
  gap: 7px;
  list-style: none;
  margin-top: 11px;
  padding: 10px 6px 9px;
  border: 2px solid #dedede;
  background:
    linear-gradient(#a8a8a8, #a8a8a8) 6px 2px / calc(100% - 12px) 2px no-repeat,
    linear-gradient(#6f9bd0, #6f9bd0) 6px 100% / calc(100% - 12px) 2px no-repeat,
    #fff;
}
.slist li {
  flex: 1;
  display: flex;
  border: 2px solid #a8a8a8;
}
.slist button {
  flex: 1;
  justify-content: flex-start;
  padding: 3px 0 0 18px;
  gap: 8px;
  font-family: Lato, sans-serif;
  font-size: 16px;
  color: #000;
}
.slist .deep {
  padding-left: 31px;
}
.mk {
  color: #2b65ac;
}
.mk.dot {
  font-size: 18px;
  line-height: 16px;
}
.slist .b {
  font-weight: 700;
}
.slist .i {
  font-style: italic;
}
.slist .blue {
  color: #2b65ac;
}
.slist .brown {
  color: #a86b29;
}
.slist .grey {
  color: #959595;
}
.slist .mark-o span {
  background: #f0dcc4;
}
.slist .mark-b span {
  background: #c5d9f3;
}
.slist .fill {
  margin: -2px 23px -2px 6px;
  padding-left: 12px;
}
.slist .part {
  justify-content: center;
  padding-left: 0;
  font-size: 24px;
  font-weight: 700;
  color: #fff;
  background: #2d66ab;
}
.slist .chat {
  color: #666;
  background: #d8d8d8;
}
.slist .control {
  background: #f0dcc4;
}
.slist .display {
  background: #c5d9f3;
}
.slist .hint {
  font-style: italic;
  font-weight: 700;
  color: #fff;
  background: #88b0e4;
}
.plist {
  display: flex;
  align-items: center;
  gap: 14px;
  margin: 20px 0;
}
.psel {
  flex: 1;
  display: flex;
  align-items: center;
  height: 38px;
  padding: 0 6px;
  border: 2px solid #cdcdcd;
  border-radius: 5px;
  background: linear-gradient(#f0f0f0, #e3e3e3);
  font-size: 16px;
}
.psel select {
  flex: 1;
}
.chk {
  display: flex;
  align-items: center;
  gap: 11px;
  height: 24px;
  margin-bottom: 12px;
}
.chk input {
  appearance: none;
  width: 23px;
  height: 23px;
  border: 1px solid #c9c9c9;
  border-radius: 6px;
  background: #fff;
}
.status {
  display: flex;
  align-items: center;
  gap: 35px;
  height: 44px;
  padding: 2px 40px 0 36px;
  border-top: 2px solid #c2c2c2;
  background: #f5f5f5;
  font-size: 19px;
  white-space: nowrap;
}
.acc {
  display: flex;
  align-items: center;
  gap: 10px;
}
.sright {
  display: flex;
  align-items: center;
  gap: 32px;
  margin-left: auto;
}
.fc {
  gap: 17px;
}
.pg {
  width: 51px;
  height: 36px;
  margin: 0 -11px;
  border-radius: 6px;
  background: #b8b8b8;
}
.zm {
  display: flex;
  align-items: center;
  gap: 12px;
  margin: 0 -4px 0 -6px;
}
.zm input {
  appearance: none;
  width: 163px;
  height: 6px;
  border-radius: 3px;
  background: #a9a9a9;
}
.zm input::-webkit-slider-thumb {
  appearance: none;
  width: 27px;
  height: 27px;
  border-radius: 50%;
  background: #fff;
  box-shadow: 0 1px 4px rgba(0, 0, 0, 0.4);
}

.chrome {
  position: relative;
  display: flex;
  flex-direction: column;
  min-width: 0;
  min-height: 0;
  border-radius: 16px;
  box-shadow: 0 16px 60px rgba(0, 0, 0, 0.5);
  background: #d5e1fb;
  color: #1f1f1f;
}
.strip {
  display: flex;
  align-items: center;
  height: 65px;
  padding-left: 34px;
}
.lights.col i {
  border: 0;
  background: #ec6a5e;
}
.lights.col i:nth-child(2) {
  background: #f4bf4f;
}
.lights.col i:nth-child(3) {
  background: #61c554;
}
.tab {
  position: relative;
  display: flex;
  align-items: center;
  align-self: flex-end;
  gap: 14px;
  width: 378px;
  height: 55px;
  margin-left: 30px;
  padding: 0 20px 10px 13px;
  border-radius: 14px 14px 0 0;
  background: #fff;
}
.tab::before,
.tab::after {
  content: '';
  position: absolute;
  bottom: 0;
  left: -14px;
  width: 14px;
  height: 14px;
  background: radial-gradient(circle at 0 0, transparent 14px, #fff 14px);
}
.tab::after {
  left: auto;
  right: -14px;
  background: radial-gradient(circle at 100% 0, transparent 14px, #fff 14px);
}
.tab span {
  flex: 1;
  font-size: 20px;
}
.new {
  margin-left: 24px;
  color: #474747;
}
.menu {
  width: 46px;
  height: 46px;
  margin: 0 8px 0 auto;
  border-radius: 16px;
  background: #edf3fd;
}
.toolbar {
  display: flex;
  align-items: center;
  height: 77px;
  padding: 0 30px 2px 27px;
  gap: 39px;
  border-radius: 14px 14px 0 0;
  border-bottom: 2px solid #dfe3e0;
  background: #fff;
  color: #454545;
}
.dim {
  color: #aaa;
}
.omni {
  flex: 1;
  display: flex;
  align-items: center;
  gap: 14px;
  height: 55px;
  margin-left: -8px;
  padding: 0 26px 0 8px;
  border-radius: 28px;
  background: #edf2fa;
}
.inf {
  display: flex;
  align-items: center;
  justify-content: center;
  width: 39px;
  height: 39px;
  border-radius: 50%;
  background: #fff;
  color: #222;
}
.omni input {
  flex: 1;
  font-size: 24px;
  background: linear-gradient(90deg, #1f1f1f 103px, #555 103px);
  background-clip: text;
  -webkit-text-fill-color: transparent;
}
.ext {
  display: flex;
  align-items: center;
  gap: 31px;
  margin-left: -10px;
}
.ext hr {
  width: 3px;
  height: 26px;
  margin: 0 -2px;
  background: #d5e1fb;
}
.mr {
  margin-left: 9px;
}
.stage {
  position: relative;
  flex: 1;
  min-height: 0;
  overflow: hidden;
  border-radius: 0 0 16px 16px;
  background: #000;
  padding: 192px 229px 0 86px;
  font-family: 'Noto Sans CJK KR', 'Noto Sans', sans-serif;
  font-size: 62px;
  line-height: 87px;
  color: #fff;
  white-space: nowrap;
}
.frame {
  height: 1700px;
  padding: 51px 57px 0 15px;
  border-top: 6px solid #424242;
  border-right: 29px solid #424242;
  border-top-right-radius: 14px;
}
.box {
  border-radius: 14px;
  padding: 0 42px 8px;
  line-height: 80px;
}
.ptitle,
.pdisp {
  margin-left: 217px;
}
.ptitle {
  height: 161px;
  line-height: 148px;
  text-align: center;
  font-size: 83px;
  font-weight: 900;
  background: #305183;
}
.pdisp {
  height: 87px;
  margin: 13px 0 33px 217px;
  color: #000;
  background: #8db2e4;
}
.phint {
  margin-top: 20px;
  font-size: 61px;
  font-style: italic;
  background: #4f75a5;
}
.sec {
  display: flex;
  align-items: flex-start;
  margin-bottom: 33px;
}
.who {
  flex: none;
  width: 130px;
  height: 86px;
  border-radius: 14px 0 0 14px;
  background: #3d6196;
  color: #9dbdf0;
  font-size: 54px;
  line-height: 77px;
  font-weight: 400;
  text-align: center;
}
.sbody {
  flex: 1;
  min-width: 0;
  padding: 0 0 4px 58px;
  border-top: 7px solid #3d6196;
  border-left: 29px solid #3d6196;
  border-radius: 0 0 0 14px;
}
.act .who {
  margin-top: 198px;
  background: #a46a2f;
  color: #fff0d0;
}
.act .sbody {
  border-color: #a46a2f;
  border-top-left-radius: 14px;
}
.sbody p {
  position: relative;
  padding-left: 116px;
  margin-top: 20px;
}
.act .box + p {
  margin-top: 14px;
}
.sbody p::before {
  content: '';
  position: absolute;
  left: 0;
  top: 20px;
  width: 43px;
  height: 43px;
  border-radius: 50%;
  background: #406596;
}
.sbody p i {
  color: #8aaee0;
}
.ka,
.kb {
  border-radius: 14px;
  padding: 0 24px;
  background: #1f4680;
  color: #a8bede;
}
.ka {
  border-radius: 14px 0 0 14px;
  padding-right: 0;
}
.kb {
  border-radius: 0 14px 14px 0;
  padding-left: 0;
}
.veil {
  position: absolute;
  left: 0;
  right: 0;
}
.veil.top {
  top: 0;
  height: 549px;
  background: linear-gradient(rgba(0, 0, 0, 0.8), rgba(14, 14, 14, 0.62) 35%, rgba(18, 18, 18, 0.56) 60%, rgba(23, 23, 23, 0.525));
}
.veil.bottom {
  top: 1021px;
  bottom: 0;
  background: linear-gradient(rgba(23, 23, 23, 0.525), rgba(20, 20, 20, 0.555) 28%, rgba(19, 19, 19, 0.59) 56%, rgba(18, 18, 18, 0.61) 69%, rgba(9, 9, 9, 0.75) 84%, rgba(3, 3, 3, 0.92) 92%, rgba(0, 0, 0, 0.98) 97%, #000);
}
.focusband {
  position: absolute;
  top: 549px;
  left: 0;
  right: 0;
  display: flex;
  align-items: center;
}
.prog {
  display: flex;
  flex-direction: column;
  align-items: center;
  justify-content: center;
  width: 130px;
  height: 138px;
  margin: 0 30px 0 auto;
  padding: 0 12px 12px 0;
  border-radius: 0 14px 14px 0;
  background: #424242;
  color: #dcdcdc;
  font-size: 54px;
  line-height: 60px;
}
.prog small {
  font-size: 38px;
  line-height: 54px;
}
.logo {
  position: absolute;
  top: 31px;
  right: 30px;
  width: 108px;
  height: 82px;
  font-family: Lato, sans-serif;
  font-size: 37px;
  line-height: 22px;
  font-weight: 900;
  font-style: italic;
  color: #757575;
  display: flex;
  flex-direction: column;
  align-items: flex-end;
  justify-content: flex-end;
}
.run {
  position: absolute;
  left: 0;
  top: 0;
  color: #434f60;
  stroke-linejoin: round;
  stroke-linecap: round;
}
.logo .w1 {
  margin-right: 18px;
}
</style>
